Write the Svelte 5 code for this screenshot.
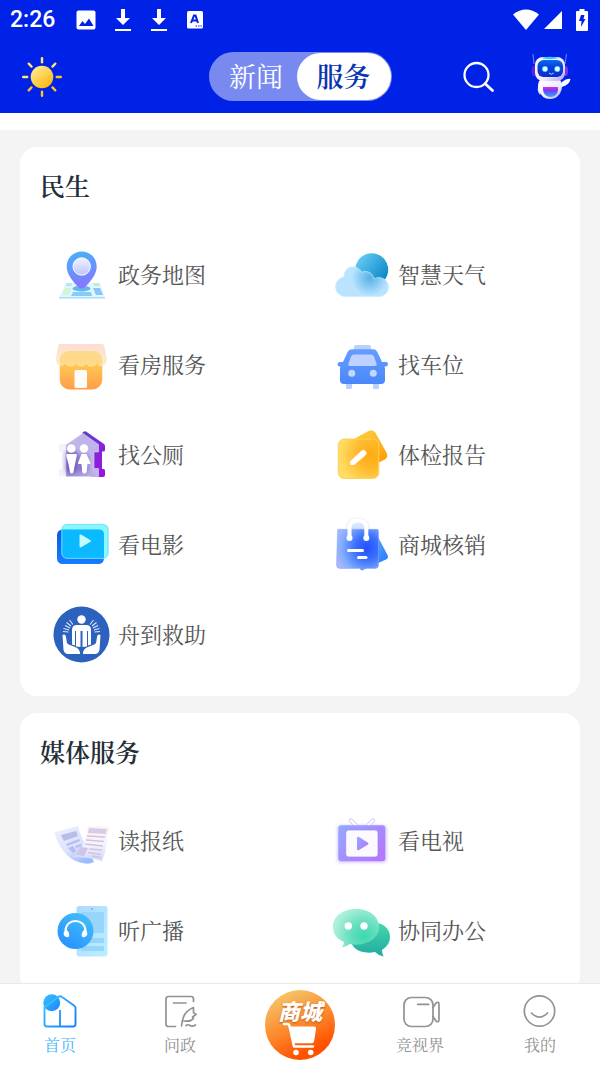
<script>
  const sections = [
    {
      title: '民生',
      items: [
        { label: '政务地图', icon: 'map' },
        { label: '智慧天气', icon: 'weather' },
        { label: '看房服务', icon: 'shop' },
        { label: '找车位', icon: 'car' },
        { label: '找公厕', icon: 'toilet' },
        { label: '体检报告', icon: 'report' },
        { label: '看电影', icon: 'movie' },
        { label: '商城核销', icon: 'bag' },
        { label: '舟到救助', icon: 'rescue' }
      ]
    },
    {
      title: '媒体服务',
      items: [
        { label: '读报纸', icon: 'paper' },
        { label: '看电视', icon: 'tv' },
        { label: '听广播', icon: 'radio' },
        { label: '协同办公', icon: 'chat' }
      ]
    }
  ];
  const tabs = ['新闻', '服务'];
  let activeTab = $state('服务');
  const rays = [0, 45, 90, 135, 180, 225, 270, 315];
</script>

{#snippet download()}
  <svg width="18" height="24" viewBox="0 0 18 24" fill="#fff"><path d="M7 1h4v9h5l-7 7-7-7h5zM1 21h16v2H1z" /></svg>
{/snippet}

{#snippet art(name)}
  <svg class="art" viewBox="0 0 56 56" aria-hidden="true">
    {#if name === 'map'}
      <defs>
        <linearGradient id="pin" x1="0" y1="0" x2="0.2" y2="1"><stop offset="0" stop-color="#43b4f8" /><stop offset="1" stop-color="#8578ff" /></linearGradient>
        <linearGradient id="pinIn" x1="0" y1="0" x2="0" y2="1"><stop offset="0" stop-color="#f1f2ff" /><stop offset="1" stop-color="#bcc3ff" /></linearGradient>
      </defs>
      <path d="M13 36h34l5 15H6z" fill="#e2f6fe" />
      <path d="M6 50h46v1.500H6z" fill="#a9dcfa" />
      <path d="M13.500 36h6l-1 3h-6z" fill="#b2e6fb" /><path d="M11.500 41h7l-2.500 7H9z" fill="#d3f5d6" />
      <path d="M40 36h6l1 3h-6z" fill="#b9ecdc" /><path d="M40 41h7l3 7h-7z" fill="#86c6fb" />
      <path d="M20 45h18l1 4H18z" fill="#83cdfa" /><ellipse cx="28.500" cy="41.500" rx="9" ry="3" fill="#63b7ed" />
      <path d="M28.700 4.500C20.500 4.500 13.700 11 13.700 19.500c0 8 6 14.500 11.500 20.500q3.500 3 7 0C37.700 34 43.700 27.500 43.700 19.500 43.700 11 37 4.500 28.700 4.500z" fill="url(#pin)" />
      <circle cx="28.700" cy="19.500" r="8.700" fill="url(#pinIn)" stroke="#fff" stroke-width="1" />
    {:else if name === 'weather'}
      <defs>
        <linearGradient id="ball" x1="0" y1="0.2" x2="0.9" y2="0.9"><stop offset="0" stop-color="#67cdf5" /><stop offset="1" stop-color="#0783c6" /></linearGradient>
        <radialGradient id="cloud" gradientUnits="userSpaceOnUse" cx="37" cy="31" r="18"><stop offset="0" stop-color="#58b1e7" /><stop offset="0.500" stop-color="#86caf3" /><stop offset="1" stop-color="#b9e3fe" /></radialGradient>
      </defs>
      <circle cx="38.700" cy="22.700" r="16.500" fill="url(#ball)" />
      <path d="M12 49.500a9.800 9.800 0 0 1-1-19.500C11 23.500 15 20 20 20c4 0 7 2 8.500 5.200C34 23 40 26 41 32q2-1.500 5-1.500a9.500 9.500 0 0 1 0 19z" fill="url(#cloud)" stroke="#c5e9ff" stroke-width="0.700" />
    {:else if name === 'shop'}
      <defs>
        <linearGradient id="shopB" x1="0" y1="0" x2="0" y2="1"><stop offset="0" stop-color="#ffcf66" /><stop offset="0.400" stop-color="#ffc452" /><stop offset="1" stop-color="#ff9e47" /></linearGradient>
        <linearGradient id="awn" x1="0" y1="0" x2="0" y2="1"><stop offset="0" stop-color="#fdd5c8" /><stop offset="1" stop-color="#fdeaba" /></linearGradient>
      </defs>
      <rect x="6.700" y="14" width="42.600" height="38.500" rx="10" fill="url(#shopB)" />
      <path d="M7 7h42q2 0 2.300 2L54 22c0 7-7 9-10 4.500-3 4-9 4-11 0-2 4-8 4-10 0-2 4-8 4-11 0C9 31 3 29 3 22L5 9q.3-2 2-2z" fill="url(#awn)" opacity="0.800" />
      <path d="M6.700 25V24q0-10 10-10h22.600q10 0 10 10v2q-3 2-5.300.5-5 4-11 0-5 4-10 0-5 4-11 0-2 1.500-5.300-.5z" fill="#fdd77f" opacity="0.750" />
      <rect x="21.500" y="33" width="12.500" height="18" rx="1.500" fill="#fffdf9" />
    {:else if name === 'car'}
      <defs><linearGradient id="car" x1="0" y1="0" x2="0" y2="1"><stop offset="0" stop-color="#659dff" /><stop offset="1" stop-color="#4b87fb" /></linearGradient></defs>
      <path d="M23 8h13q2 0 2 2v4H21v-4q0-2 2-2zM13 45h6v6q0 1-1 1h-4q-1 0-1-1zM40 45h6v6q0 1-1 1h-4q-1 0-1-1z" fill="#b9d0ff" />
      <path d="M19 12.300h21q3 0 4.500 3L49 25h4q2 0 2 2t-2 2.500h-1.500l.5 2V43q0 4-4 4H11q-4 0-4-4V31.500l.500-2H6.500q-2 0-2-2T6.500 25H10l4.500-9.700q1.500-3 4.500-3z" fill="url(#car)" />
      <path d="M21 17.500h17q2 0 3 2l2.500 7q.8 2.500-1.500 2.500H17q-2.300 0-1.500-2.500l2.500-7q1-2 3-2z" fill="#bdd2ff" />
      <circle cx="18.700" cy="36.300" r="3.500" fill="#c3d6ff" /><circle cx="40.300" cy="36.300" r="3.500" fill="#c3d6ff" />
    {:else if name === 'toilet'}
      <defs>
        <linearGradient id="wcB" x1="0" y1="0" x2="1" y2="1"><stop offset="0" stop-color="#5447c6" /><stop offset="0.700" stop-color="#8d1edc" /><stop offset="1" stop-color="#9c12df" /></linearGradient>
        <linearGradient id="wcF" x1="0" y1="1" x2="1" y2="0"><stop offset="0" stop-color="#9686d3" /><stop offset="0.500" stop-color="#c2b5e8" /><stop offset="1" stop-color="#b8b4ee" /></linearGradient>
        <filter id="wcS" x="-50%" y="-50%" width="200%" height="200%"><feGaussianBlur stdDeviation="2" /></filter>
      </defs>
      <path d="M29 6L31 4.500q1-.7 2 0L51 17q1 .8 1 2v4q0 1.500-1.500 1.500H49V42h1.500q1.500 0 1.500 1.500v4.500q0 2-2 2H38V18z" fill="url(#wcB)" />
      <path d="M6 17h8v32.500H6V42h3V25H6z" fill="#f5f3f9" />
      <path d="M29.700 6.300L45.500 17.500V25H41v16.500h4.500v8H13V18z" fill="url(#wcF)" stroke="#ddd6f5" stroke-width="0.600" />
      <path d="M13 25h12v20H13zM27 28h8v16h-8z" fill="#5638ab" opacity="0.650" filter="url(#wcS)" />
      <g fill="#fff"><circle cx="18.300" cy="21.500" r="4.300" /><path d="M14 27h9q1 0 .8 1.500L22 37l-1.500 8q-2 3-3.500 0L15.500 37l-2.300-8.500Q13 27 14 27z" /><circle cx="31" cy="21.500" r="4.200" /><path d="M28.500 27h5l4 9q.5 1-1 1H34.500l-.8 8q-2.500 3-4.500 0L28.500 37H26q-1.500 0-1-1z" /></g>
    {:else if name === 'report'}
      <defs>
        <linearGradient id="repB" x1="0.300" y1="0" x2="0.700" y2="1"><stop offset="0" stop-color="#ffcb3c" /><stop offset="1" stop-color="#ff9700" /></linearGradient>
        <radialGradient id="repF" gradientUnits="userSpaceOnUse" cx="38" cy="28" r="31"><stop offset="0" stop-color="#ffab0e" /><stop offset="0.450" stop-color="#ffb82c" /><stop offset="1" stop-color="#ffdc62" /></radialGradient>
      </defs>
      <path d="M19 13l17-9.200q4-2 6.500 2l11 20q2 4-1.500 6.500L34 42z" fill="url(#repB)" />
      <rect x="5.300" y="12" width="40.500" height="39.500" rx="6" fill="url(#repF)" stroke="#ffd155" />
      <path d="M17.500 36.500v-2L28.700 24q2-1.500 3.700.3t0 3.700L21 37.500h-3q-.5 0-.5-1z" fill="#fff" stroke="#fff" stroke-linejoin="round" />
    {:else if name === 'movie'}
      <defs><linearGradient id="mv" x1="0" y1="0" x2="0" y2="1"><stop offset="0" stop-color="#0a57e7" /><stop offset="1" stop-color="#1a7cff" /></linearGradient></defs>
      <rect x="4" y="12.500" width="47" height="34.500" rx="5.500" fill="url(#mv)" />
      <rect x="8.500" y="7" width="47" height="34.700" rx="5.500" fill="#76f4ff" opacity="0.850" />
      <path d="M8.500 12.500H46q5 0 5 5V41.200H14q-5.500 0-5.500-5z" fill="#0bb9fe" />
      <rect x="8.900" y="7.400" width="46.200" height="33.900" rx="5" fill="none" stroke="#6edbff" stroke-width="0.800" />
      <path d="M26.500 18.500v11q0 1.500 1.500.8l9.500-5.500q1-.8 0-1.500L28 17.500q-1.500-.5-1.500 1z" fill="#c5fbff" />
    {:else if name === 'bag'}
      <defs>
        <linearGradient id="bgB" x1="0" y1="0" x2="1" y2="1"><stop offset="0" stop-color="#72c2ff" /><stop offset="1" stop-color="#2173ff" /></linearGradient>
        <linearGradient id="bgH" x1="0" y1="0" x2="0" y2="1"><stop offset="0" stop-color="#eef1ff" /><stop offset="1" stop-color="#c9dcff" /></linearGradient>
        <radialGradient id="bgF" gradientUnits="userSpaceOnUse" cx="34" cy="31" r="34"><stop offset="0" stop-color="#2450ff" /><stop offset="0.350" stop-color="#3b70fd" /><stop offset="0.750" stop-color="#83aefd" /><stop offset="1" stop-color="#b1b7fa" /></radialGradient>
        <filter id="bgS" x="-30%" y="-30%" width="160%" height="160%"><feGaussianBlur stdDeviation="1" /></filter>
      </defs>
      <path d="M14.500 13V10.500C14.500-1 35.300-1 35.300 10.500V13" fill="none" stroke="#dfe4fb" stroke-width="1.500" filter="url(#bgS)" />
      <path d="M40 14l4 4 10.500 20q1.500 3-1.500 4.500L30 53q-2 .8-3-1z" fill="url(#bgB)" />
      <path d="M16 13V9C18 1 32 0 33.500 9v4z" fill="url(#bgH)" />
      <path d="M5 12.300h39q1.500 0 1.500 1.500V48q0 3.500-3.500 3.500H7q-3.500 0-3.500-3.500l1-34q0-1.700.5-1.700z" fill="url(#bgF)" stroke="#82a8ff" stroke-width="0.500" />
      <path d="M16.500 21V10.500C16.500 1 33.300 1 33.300 10.500V21" fill="none" stroke="#fff" stroke-width="4" />
      <g fill="#fff"><circle cx="16.500" cy="21" r="3" /><circle cx="33.300" cy="21" r="3" /><rect x="14" y="32" width="17" height="3" rx="1.500" /><rect x="24" y="39" width="10.500" height="3" rx="1.500" /></g>
    {:else if name === 'rescue'}
      <circle cx="28.500" cy="27.500" r="28" fill="#2c62bd" />
      <g fill="#fff">
        <circle cx="28.500" cy="12.500" r="4.200" />
        <path d="M19 37.500V23q0-5 5-5h9q5 0 5 5v14.500l-3 1V24h-1v15.500l-4.500.5V24h-2v16l-4.500-.5V24h-1v14.500z" />
        <path d="M9.500 28q2.500-1.500 3.300 1L14 36q1 1.500 3 2l5 2q5 1.500 5 7H15q-3.500 0-4.500-4zM47.500 28q-2.500-1.500-3.300 1L43 36q-1 1.500-3 2l-5 2q-5 1.500-5 7h12q3.500 0 4.500-4z" />
      </g>
      <path d="M10 24.500l5.500.5M10.500 21.500l5.500 1.500M12 18.500l5 2.500M13.500 15.500l4.500 3.500M16.500 13l3.500 4.500M47 24.500l-5.500.5M46.500 21.500L41 23M45 18.500L40 21M43.500 15.500L39 19M40.500 13L37 17.500" stroke="#dce7ff" stroke-width="1.100" />
    {:else if name === 'paper'}
      <defs>
        <linearGradient id="ppL" x1="0" y1="0" x2="0.700" y2="1"><stop offset="0" stop-color="#f0f1ff" /><stop offset="0.600" stop-color="#dce2ff" /><stop offset="1" stop-color="#9dbbff" /></linearGradient>
        <linearGradient id="ppR" x1="0.500" y1="0" x2="0.500" y2="1"><stop offset="0" stop-color="#fff3ec" /><stop offset="0.500" stop-color="#f7f4ff" /><stop offset="1" stop-color="#ced8ff" /></linearGradient>
      </defs>
      <path d="M1 19.500L25 13q2 10 11 25l5 11q-5 3-14 .5C13 46 6 33 1 19.500z" fill="url(#ppL)" />
      <path d="M8 22l15-4 2 5-14 5zM13 31l13-5 1 2-13 5zM15 35l5-2 3 5-3 2zM22 33l6-2 1 2-6 2z" fill="#b7bde9" />
      <path d="M35 13l21.500.5C54 25 54 37 49 48q-13-4-29-4c9-6 13-18 15-31z" fill="url(#ppR)" />
      <path d="M36 15l18 1-1 5-18-1z" fill="#d4cce9" />
      <path d="M34 23l18 1M33 27l18 1.500M32 31l18 2M36 36l13 1M35 39.500l13 2M39 43l9 1.500" stroke="#d3c4dc" stroke-width="1.500" />
      <path d="M28 34l7 1-4 8-8-1z" fill="#cec5e9" />
    {:else if name === 'tv'}
      <defs>
        <linearGradient id="tv" x1="0" y1="0" x2="1" y2="0.700"><stop offset="0" stop-color="#93a9ff" /><stop offset="1" stop-color="#b477ff" /></linearGradient>
        <filter id="tvS" x="-30%" y="-30%" width="160%" height="160%"><feGaussianBlur stdDeviation="1.500" /></filter>
      </defs>
      <rect x="4" y="12" width="50" height="38" rx="4" fill="#ddd0ff" filter="url(#tvS)" />
      <path d="M18 7.500l6 6M40 7.500l-6 6" stroke="#dccdff" stroke-width="4.500" stroke-linecap="round" /><path d="M18 7.500l6 6M40 7.500l-6 6" stroke="#fff" stroke-width="2.300" stroke-linecap="round" />
      <rect x="5.300" y="12.300" width="47" height="36" rx="3" fill="url(#tv)" />
      <rect x="12.700" y="17" width="32.300" height="27" rx="3" fill="#fcf9ff" stroke="#9e86ef" stroke-width="0.700" />
      <path d="M24 25v11q0 2 2 1l9-5.500q1.200-.8 0-1.700L26 24q-2-1-2 1z" fill="url(#tv)" />
    {:else if name === 'radio'}
      <defs>
        <linearGradient id="rdP" x1="0" y1="0" x2="1" y2="1"><stop offset="0" stop-color="#abd9ff" /><stop offset="1" stop-color="#baf0ff" /></linearGradient>
        <linearGradient id="rdC" x1="1" y1="0" x2="0.300" y2="1"><stop offset="0" stop-color="#48c4fb" /><stop offset="1" stop-color="#2793ff" /></linearGradient>
      </defs>
      <rect x="23.500" y="3" width="31" height="50.500" rx="3" fill="url(#rdP)" /><circle cx="39" cy="6" r="1" fill="#67b7f7" />
      <path d="M28 9h23v21H28zM35 35h16v5H35zM28 43h23v5H28z" fill="#97d5fb" />
      <circle cx="22.500" cy="28" r="18" fill="url(#rdC)" />
      <path d="M12.500 31v-3C12.500 14.500 32.500 14.500 32.500 28v3" fill="none" stroke="#fff" stroke-width="2" /><path d="M13 27c3 0 4.500 7 2 7.200-4 .2-6.500-4-2-7.200zM32 27c-3 0-4.500 7-2 7.200 4 .2 6.500-4 2-7.200z" fill="#fff" />
    {:else if name === 'chat'}
      <defs>
        <linearGradient id="chB" x1="0" y1="0" x2="0" y2="1"><stop offset="0" stop-color="#45d9ad" /><stop offset="1" stop-color="#22aaa0" /></linearGradient>
        <radialGradient id="chF" gradientUnits="userSpaceOnUse" cx="31" cy="33" r="31"><stop offset="0" stop-color="#3bd8b0" /><stop offset="0.450" stop-color="#67dfbf" /><stop offset="1" stop-color="#aff0da" /></radialGradient>
      </defs>
      <path d="M40 19C51 20 57 26 57 34q0 8-8 13 0 3 1.500 6.500-5-1-8.500-4.500C27 52 17 44 18 36z" fill="url(#chB)" />
      <path d="M23 6C36 6 46 13 46 24c0 12-14 20-29 17q-4 3-8.500 3.500Q11 42 11 39C4 36 0 31 0 24 0 13 10 6 23 6z" fill="url(#chF)" />
      <circle cx="15.300" cy="23" r="3.700" fill="#fff" /><circle cx="31" cy="23" r="3.700" fill="#fff" />
    {/if}
  </svg>
{/snippet}

<div class="app">
  <header>
    <div class="status">
      <div class="notices">
        <span class="time">2:26</span>
        <svg width="20" height="20" viewBox="0 0 20 20"><rect x="0.500" y="0.500" width="19" height="19" rx="2" fill="#fff" /><path d="M3 16l3.500-5 2.500 3 4-5.500 4.500 7.500z" fill="#0022e6" /></svg>
        {@render download()}
        {@render download()}
        <svg width="18" height="20" viewBox="0 0 18 20"><rect x="1" y="1" width="16" height="17.500" rx="1.500" fill="#fff" /><path d="M5 13L8 5.500h1.500L12 13M6 10.500h5" fill="none" stroke="#0022e6" stroke-width="2" /><path d="M9.500 16h1.500M12 16h1.500M14.500 16H16" stroke="#0022e6" /></svg>
      </div>
      <div class="signals">
        <svg width="26" height="22" viewBox="0 0 26 22"><path d="M0 5.500Q13-4.500 26 5.500L13 21z" fill="#fff" /></svg>
        <svg width="18" height="20" viewBox="0 0 18 20"><path d="M18 1v18H0z" fill="#fff" /></svg>
        <svg class="battery" width="12" height="22" viewBox="0 0 12 22"><path d="M3.500 0h5v2H11q1 0 1 1v18q0 1-1 1H1q-1 0-1-1V3q0-1 1-1h2.500z" fill="#fff" /><path d="M5 6h3.500L7.500 10H9.500L5 18l.5-6H3z" fill="#0022e6" /></svg>
      </div>
    </div>
    <div class="bar">
      <button class="weather" aria-label="天气">
        <svg width="40" height="40" viewBox="0 0 40 40">
          <defs><linearGradient id="sun" x1="0" y1="0" x2="0.800" y2="1"><stop offset="0" stop-color="#fff3a1" /><stop offset="1" stop-color="#ffb40b" /></linearGradient></defs>
          <circle cx="20" cy="20" r="11.300" fill="url(#sun)" />
          {#each rays as angle}
            <path d="M20 1.200v4" transform="rotate({angle} 20 20)" stroke={angle > 60 && angle < 250 ? '#ffc228' : '#ffe575'} stroke-width="2.400" stroke-linecap="round" />
          {/each}
        </svg>
      </button>
      <div class="switch" role="tablist">
        {#each tabs as tab}
          <button role="tab" aria-selected={tab === activeTab} class:active={tab === activeTab} onclick={() => (activeTab = tab)}>{tab}</button>
        {/each}
      </div>
      <div class="tools">
        <button aria-label="搜索">
          <svg width="36" height="36" viewBox="0 0 36 36" fill="none" stroke="#fff" stroke-linecap="round"><circle cx="15.500" cy="16" r="12" stroke-width="2.300" /><path d="M24.500 25l7 6.500" stroke-width="2.800" /></svg>
        </button>
        <button aria-label="助手">
          <svg width="44" height="50" viewBox="0 0 44 50">
            <defs>
              <linearGradient id="shell" x1="0" y1="0" x2="1" y2="1"><stop offset="0" stop-color="#fff" /><stop offset="0.600" stop-color="#f1edff" /><stop offset="1" stop-color="#a9a1f5" /></linearGradient>
              <linearGradient id="visor" x1="0" y1="0" x2="0" y2="1"><stop offset="0" stop-color="#0d6af0" /><stop offset="0.400" stop-color="#0741e0" /><stop offset="1" stop-color="#102bc9" /></linearGradient>
              <linearGradient id="belly" x1="0" y1="0" x2="0" y2="1"><stop offset="0" stop-color="#d131ed" /><stop offset="0.350" stop-color="#763bf1" /><stop offset="1" stop-color="#26adfa" /></linearGradient>
            </defs>
            <path d="M4 2l1 10M37.500 2l-1.500 10" stroke="#6c85f8" stroke-width="1" />
            <ellipse cx="5" cy="19" rx="2.500" ry="5" fill="#5a28dc" /><ellipse cx="36.500" cy="19" rx="2.500" ry="5" fill="#7a3ae8" />
            <path d="M10 31q-3 7 1 12l3-10z" fill="#e9e5ff" /><path d="M30 35l3-5q5-4 8.500-3-1 6-9 8z" fill="#fff" />
            <path d="M11 28h20q3 3 1.500 10-3 9-11.500 9t-11-9Q8 31 11 28z" fill="url(#shell)" />
            <path d="M14 35h15v3q-1 7-7.500 7T14 38z" fill="url(#belly)" />
            <rect x="6" y="5" width="30" height="24" rx="8" fill="url(#shell)" />
            <rect x="8.500" y="8" width="25.500" height="17" rx="6" fill="url(#visor)" /><ellipse cx="21" cy="6" rx="8" ry="1.200" fill="#36c8fa" />
            <circle cx="16" cy="17" r="3" fill="#38d8ff" /><circle cx="28.300" cy="17" r="3" fill="#38d8ff" /><circle cx="16" cy="17" r="2.200" fill="#fff" /><circle cx="28.300" cy="17" r="2.200" fill="#fff" />
            <path d="M20 21q2.300 2.500 4.600 0" fill="none" stroke="#a6e9ff" />
          </svg>
        </button>
      </div>
    </div>
  </header>

  <main>
    {#each sections as section}
      <section>
        <h2>{section.title}</h2>
        <div class="grid">
          {#each section.items as item}
            <a href="#{item.icon}">{@render art(item.icon)}<span>{item.label}</span></a>
          {/each}
        </div>
      </section>
    {/each}
  </main>

  <nav>
    <a class="current" href="#home">
      <svg width="40" height="40" viewBox="0 0 40 40" fill="none" stroke-width="1.900" stroke-linejoin="round">
        <defs><linearGradient id="home" gradientUnits="userSpaceOnUse" x1="4" y1="8" x2="36" y2="32"><stop offset="0" stop-color="#39c6ff" /><stop offset="1" stop-color="#197cff" /></linearGradient>
        <linearGradient id="dot" x1="0" y1="0" x2="1" y2="1"><stop offset="0" stop-color="#3cc5ff" /><stop offset="1" stop-color="#1d80ff" /></linearGradient></defs>
        <path d="M4.500 16v17q0 2.500 2.500 2.500h26q2.500 0 2.500-2.500V17q0-1.500-1.500-2.500L22 6q-2-1.500-4 0L5.500 15.500M20 19v16.500" stroke="url(#home)" />
        <circle cx="11.700" cy="11.700" r="8.500" fill="url(#dot)" /><path d="M5 16l13-10" stroke="#39c9ff" stroke-width="1.200" />
      </svg>
      <span>首页</span>
    </a>
    <a href="#ask">
      <svg class="line" width="40" height="40" viewBox="0 0 40 40"><path d="M33.500 10.500V8q0-2.500-2.500-2.500H8.500Q6 5.500 6 8v25q0 2.500 2.500 2.500h7M13.500 12H26M21.500 35c1-10 4-15 12-18.500v5l2.500 2-3.500 2.500 1 1.500c-2.500 3-5 3-9.500 2.500M26 34.500q2-1.500 4 0t5.500-.5" /></svg>
      <span>问政</span>
    </a>
    <a class="mall" href="#mall">
      <span class="disc">
        <b>商城</b>
        <svg width="40" height="36" viewBox="14 31 40 36"><path d="M18 34h3q2 0 2.500 2L28 56.500h19" fill="none" stroke="#fff" stroke-width="2.500" stroke-linecap="round" stroke-linejoin="round" /><path d="M23.500 36.500H48q2.500 0 2 2.500L48 51.500q-.3 1.800-2 1.800H27.500z" fill="#fff" /><circle cx="30" cy="62.500" r="2.800" fill="#fff" /><circle cx="44.700" cy="62.500" r="2.800" fill="#fff" /></svg>
      </span>
    </a>
    <a href="#video">
      <svg class="line" width="40" height="40" viewBox="0 0 40 40"><rect x="4" y="6.500" width="29" height="29" rx="7.500" /><path d="M17.700 13.300h11M33 16.500l3-4.500q3-2 3 1.500v15q0 3.500-3 1.500L33 25.500" /></svg>
      <span>竞视界</span>
    </a>
    <a href="#me">
      <svg class="line" width="40" height="40" viewBox="0 0 40 40"><circle cx="19.500" cy="20" r="15.200" /><path d="M11.500 22q8 8 16 0" /></svg>
      <span>我的</span>
    </a>
  </nav>
</div>

<style>
  :global(body) { margin: 0; }
  .app {
    display: flex;
    flex-direction: column;
    height: 100vh;
    background: #fff;
    font-family: 'Noto Serif CJK SC', 'Noto Serif SC', 'Noto Sans CJK SC', sans-serif;
  }
  svg { display: block; flex: none; }
  button { padding: 0; border: 0; background: none; font-family: inherit; cursor: pointer; }
  a { color: inherit; text-decoration: none; }

  header { flex: none; background: #0022e6; color: #fff; }
  .status { display: flex; align-items: center; justify-content: space-between; height: 40px; padding: 0 12px 0 10px; }
  .notices { display: flex; align-items: center; gap: 18px; }
  .time { margin-right: 3px; font: 500 23px/40px Roboto, sans-serif; }
  .signals { display: flex; align-items: center; gap: 5px; }
  .battery { margin-left: 9px; }
  .bar { display: grid; grid-template-columns: 1fr auto 1fr; align-items: center; height: 73px; }
  .weather { justify-self: start; margin-left: 22px; }
  .switch { display: flex; box-sizing: border-box; height: 49px; padding: 1px; border-radius: 25px; background: #7889ef; }
  .switch button { width: 87px; padding: 0 0 2px 6px; border-radius: 24px; color: #fff; font-size: 27px; line-height: 45px; }
  .switch button.active { width: 94px; padding: 0 0 2px; background: #fff; color: #0a35b0; font-weight: 600; }
  .tools { display: flex; align-items: center; justify-self: end; gap: 32px; margin-right: 27px; }

  main {
    display: flex;
    flex: 1;
    flex-direction: column;
    gap: 17px;
    min-height: 0;
    margin-top: 17px;
    padding: 17px 20px 0;
    overflow-y: auto;
    scrollbar-width: none;
    background: #f4f4f4;
  }
  section { flex: none; padding-bottom: 16px; border-radius: 17px; background: #fff; }
  h2 { margin: 0; padding: 18px 20px 25px; color: #242e38; font-size: 25px; font-weight: 600; line-height: 40px; }
  .grid { display: grid; grid-template-columns: 1fr 1fr; grid-auto-rows: 90px; }
  .grid a { display: flex; align-items: center; gap: 9px; padding-left: 33px; color: #555; font-size: 22px; line-height: 32px; }
  .grid span { padding-bottom: 3px; }
  .art { width: 56px; height: 56px; overflow: visible; }

  nav { display: grid; flex: none; grid-template-columns: repeat(5, 1fr); height: 82px; border-top: 1px solid #e9e9e9; background: #fff; color: #929292; }
  nav a { display: flex; flex-direction: column; align-items: center; padding-top: 7px; font-size: 16px; line-height: 24px; }
  nav a > span { margin-top: 2px; }
  .current { color: #45b5fb; }
  .line { fill: none; stroke: #929292; stroke-width: 1.7px; stroke-linecap: round; stroke-linejoin: round; }
  nav .disc { display: flex; flex-direction: column; align-items: center; box-sizing: border-box; width: 70px; height: 70px; margin: 0; padding-top: 9px; border-radius: 50%; background: linear-gradient(155deg, #f5c669 10%, #fe8429 52%, #ff5200 80%); color: #fff; }
  .disc b { font-family: 'Noto Sans CJK SC', sans-serif; font-size: 22px; font-style: italic; font-weight: 900; line-height: 22px; text-shadow: 0 1px 2px #b85a19; }
  .mall { padding-top: 6px; }
</style>
